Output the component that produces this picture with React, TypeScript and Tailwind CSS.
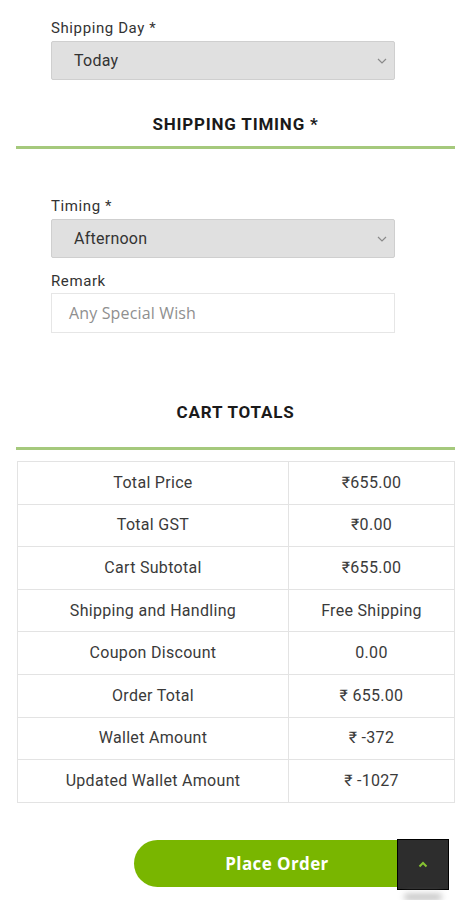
import React from "react";

const rows: [string, string][] = [
  ["Total Price", "₹655.00"],
  ["Total GST", "₹0.00"],
  ["Cart Subtotal", "₹655.00"],
  ["Shipping and Handling", "Free Shipping"],
  ["Coupon Discount", "0.00"],
  ["Order Total", "₹ 655.00"],
  ["Wallet Amount", "₹ -372"],
  ["Updated Wallet Amount", "₹ -1027"],
];

const Chevron: React.FC = () => (
  <svg width="10" height="6" viewBox="0 0 10 6" fill="none" className="absolute right-[7px] top-1/2 -translate-y-1/2">
    <path d="M1 1l4 4 4-4" stroke="#8a8a8a" strokeWidth="1.2" />
  </svg>
);

const SelectBox: React.FC<{ value: string }> = ({ value }) => (
  <div className="relative mt-[3px] h-[39px] w-[344px] rounded-[2px] border border-[#cfcfcf] bg-[#e0e0e0] pl-[22px] text-[16px] leading-[37px] tracking-[0.25px] text-[#333]">
    {value}
    <Chevron />
  </div>
);

const SectionTitle: React.FC<{ label: string; mt: string }> = ({ label, mt }) => (
  <div className={`${mt} text-center text-[17px] font-bold leading-[24px] tracking-[0.8px] text-[#1a1a1a]`}>{label}</div>
);

const App: React.FC = () => {
  return (
    <div className="relative h-[900px] w-[471px] overflow-hidden bg-white font-['Roboto',sans-serif] text-[#333]">
      <div className="px-[51px] pt-[18px]">
        <div className="text-[15px] leading-[20px] tracking-[0.6px]">Shipping Day *</div>
        <SelectBox value="Today" />
      </div>
      <SectionTitle label="SHIPPING TIMING *" mt="mt-[32px]" />
      <div className="mx-[16px] mt-[10px] h-[3px] bg-[#a5c97c]" />

      <div className="mt-[47px] px-[51px]">
        <div className="text-[15px] leading-[20px] tracking-[0.6px]">Timing *</div>
        <SelectBox value="Afternoon" />
        <div className="mt-[13px] text-[15px] leading-[20px] tracking-[0.6px]">Remark</div>
        <div className="mt-[2px] h-[40px] w-[344px] border border-[#e6e6e6] bg-white pl-[17px] font-['Open_Sans',sans-serif] text-[16px] leading-[38px] tracking-[0.15px] text-[#8f8f8f]">
          Any Special Wish
        </div>
      </div>

      <SectionTitle label="CART TOTALS" mt="mt-[67px]" />
      <div className="mx-[16px] mt-[23px] h-[3px] bg-[#a5c97c]" />

      <div className="ml-[17px] mt-[11px] w-[438px] border-l border-t border-[#e3e3e3]">
        {rows.map(([k, v]) => (
          <div key={k} className="grid h-[42.6px] grid-cols-[271px_1fr] text-[16px] tracking-[0.3px] text-[#3a3a3a]">
            <div className="flex items-center justify-center border-b border-r border-[#e3e3e3]">{k}</div>
            <div className="flex items-center justify-center border-b border-r border-[#e3e3e3]">{v}</div>
          </div>
        ))}
      </div>

      <div className="relative mt-[37px] h-[62px]">
        <div className="ml-[134px] flex h-[47px] w-[286px] items-center justify-center rounded-l-full bg-[#79b600] font-['Open_Sans',sans-serif] text-[17px] font-bold tracking-[0.4px] text-white">
          Place Order
        </div>
        <div className="absolute left-[397px] top-[-1px] flex h-[51px] w-[52px] items-center justify-center border border-black bg-[#2d2d2d]">
          <svg width="10" height="7" viewBox="0 0 10 7" fill="none">
            <path d="M1.5 5.5L5 2l3.5 3.5" stroke="#86c232" strokeWidth="2" />
          </svg>
        </div>
        <div className="absolute left-[404px] top-[54px] h-[6px] w-[38px] rounded-full bg-[#bdbdbd] blur-[3px]" />
      </div>
    </div>
  );
};

export default App;
